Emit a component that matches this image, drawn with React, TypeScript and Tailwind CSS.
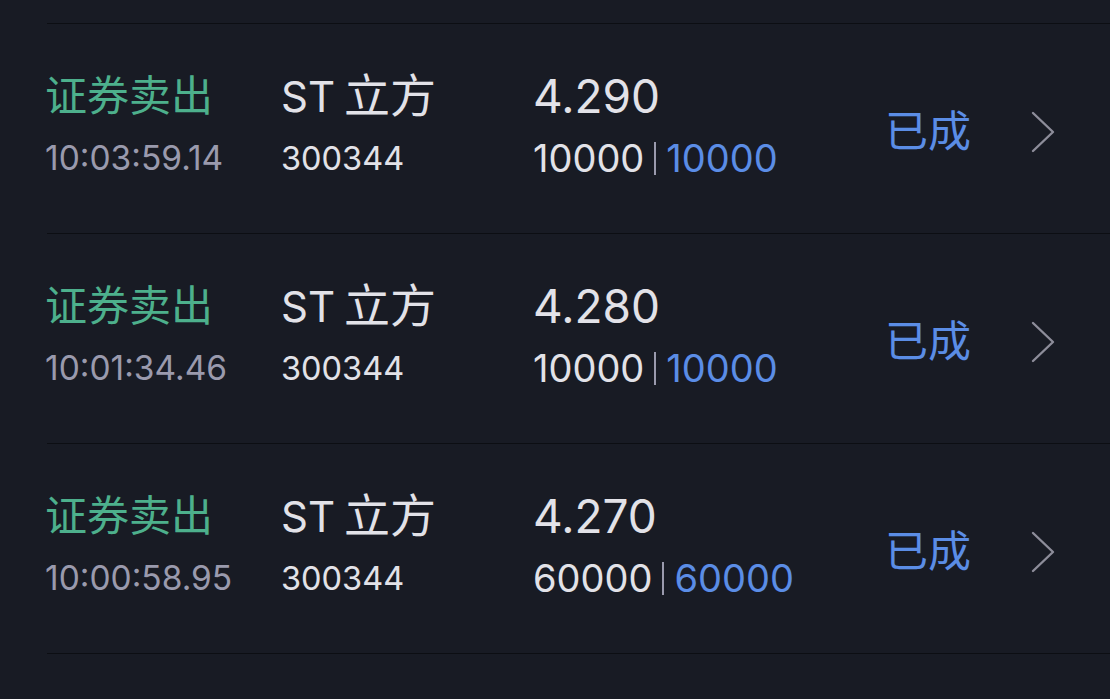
interface Order {
  time: string
  price: string
  qty: string
  filled: string
}

const orders: Order[] = [
  { time: '10:03:59.14', price: '4.290', qty: '10000', filled: '10000' },
  { time: '10:01:34.46', price: '4.280', qty: '10000', filled: '10000' },
  { time: '10:00:58.95', price: '4.270', qty: '60000', filled: '60000' },
]

const font = { fontFamily: 'Inter, "Noto Sans CJK SC", sans-serif' }

function Chevron() {
  return (
    <svg width="24" height="42" viewBox="0 0 24 42" fill="none" className="shrink-0 mt-[10px]">
      <polyline points="2,2 22,21 2,40" stroke="#8d8d9a" strokeWidth="2.4" strokeLinecap="round" strokeLinejoin="round" />
    </svg>
  )
}

export default function App() {
  return (
    <div className="w-[1110px] h-[699px] bg-[#181b24] overflow-hidden" style={font}>
      <div className="h-[23px]" />
      <div className="ml-[47px] border-t border-[#0c0e13]">
        {orders.map((o) => (
          <div key={o.time} className="h-[210px] pb-[4px] flex items-center border-b border-[#0c0e13]">
            <div className="-ml-[2px] flex items-center">
              {/* type + time */}
              <div className="w-[236px] flex flex-col">
                <span className="text-[42px] leading-[62px] text-[#4db08c]">证券卖出</span>
                <span className="text-[33.5px] leading-[62px] text-[#9a9aad]">{o.time}</span>
              </div>

              {/* name + code */}
              <div className="w-[252px] flex flex-col">
                <span className="leading-[62px] text-[#e2e2e8] flex items-baseline">
                  <span className="text-[42px]">ST</span>
                  <span className="text-[46px] ml-[9px]">立方</span>
                </span>
                <span className="text-[32.5px] leading-[62px] text-[#e2e2e8]">300344</span>
              </div>

              {/* price + qty */}
              <div className="w-[352px] flex flex-col">
                <span className="text-[46px] leading-[62px] text-[#e2e2e8]">{o.price}</span>
                <span className="text-[38px] leading-[62px] text-[#e2e2e8] flex items-center">
                  {o.qty}
                  <span className="inline-block w-[2px] h-[33px] bg-[#9a9aad] ml-[10px] mr-[10px] mt-[2px]" />
                  <span className="text-[#5b8de6]">{o.filled}</span>
                </span>
              </div>

              {/* status */}
              <span className="w-[146px] text-[43px] text-[#5b8de6] mt-[10px]">已成</span>
              <Chevron />
            </div>
          </div>
        ))}
      </div>
    </div>
  )
}
